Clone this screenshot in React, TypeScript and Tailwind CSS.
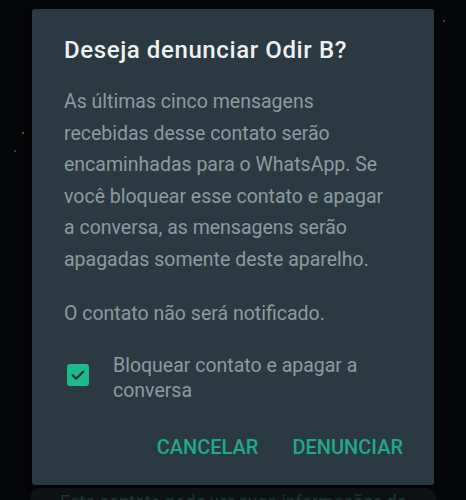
export default function App() {
    return (
        <div
            className="relative flex h-[500px] w-[466px] flex-col overflow-hidden bg-[#050607]"
            style={{ fontFamily: "Roboto, 'Noto Sans', sans-serif" }}
        >
            {/* wallpaper specks */}
            <span className="absolute left-[22px] top-[132px] h-[2px] w-[2px] rounded-full bg-white/40" />
            <span className="absolute left-[14px] top-[150px] h-[2px] w-[2px] rounded-full bg-white/30" />
            <span className="absolute left-[443px] top-[20px] h-[2px] w-[2px] rounded-full bg-white/30" />

            <div className="mx-[32px] mt-[9px] flex flex-col rounded-[3px] bg-[#2b3a42] px-[32px] pb-[26px] pt-[27px] shadow-[0_2px_6px_rgba(0,0,0,0.6)]">
                <h2 className="text-[24px] font-medium leading-[28px] tracking-[0.6px] text-[#eef1f2]">
                    Deseja denunciar Odir B?
                </h2>

                <p className="mt-[22px] whitespace-nowrap text-[19.5px] leading-[31.5px] text-[#8b9aa1]">
                    As últimas cinco mensagens
                    <br />
                    recebidas desse contato serão
                    <br />
                    encaminhadas para o WhatsApp. Se
                    <br />
                    você bloquear esse contato e apagar
                    <br />
                    a conversa, as mensagens serão
                    <br />
                    apagadas somente deste aparelho.
                </p>
                <p className="mt-[23px] text-[19.5px] leading-[31.5px] text-[#8b9aa1]">O contato não será notificado.</p>

                <label className="mt-[23px] flex items-start gap-[24px] pl-[3px]">
                    <span className="mt-[11px] flex h-[22px] w-[22px] shrink-0 items-center justify-center rounded-[3px] bg-[#1fb98e]">
                        <svg viewBox="0 0 24 24" className="h-[18px] w-[18px]" fill="none" stroke="#22313a" strokeWidth="3">
                            <path strokeLinecap="round" strokeLinejoin="round" d="M5 12.5l4.5 4.5L19 7.5" />
                        </svg>
                    </span>
                    <span className="whitespace-nowrap text-[19.5px] leading-[25px] text-[#8b9aa1]">
                        Bloquear contato e apagar a
                        <br />
                        conversa
                    </span>
                </label>

                <div className="mr-[-1px] mt-[32px] flex justify-end gap-[34px]">
                    <button type="button" className="text-[20px] font-medium leading-[24px] text-[#1fa98a]">
                        CANCELAR
                    </button>
                    <button type="button" className="text-[20px] font-medium leading-[24px] text-[#1fa98a]">
                        DENUNCIAR
                    </button>
                </div>
            </div>

            <div className="mx-[30px] mt-[3px] flex-1 rounded-t-[10px] bg-[#0f1214] px-[30px] pt-[2px]">
                <p className="whitespace-nowrap text-[18px] leading-[24px] text-[#1d3631]">
                    Este contato pode ver suas informações de
                </p>
            </div>
        </div>
    );
}
